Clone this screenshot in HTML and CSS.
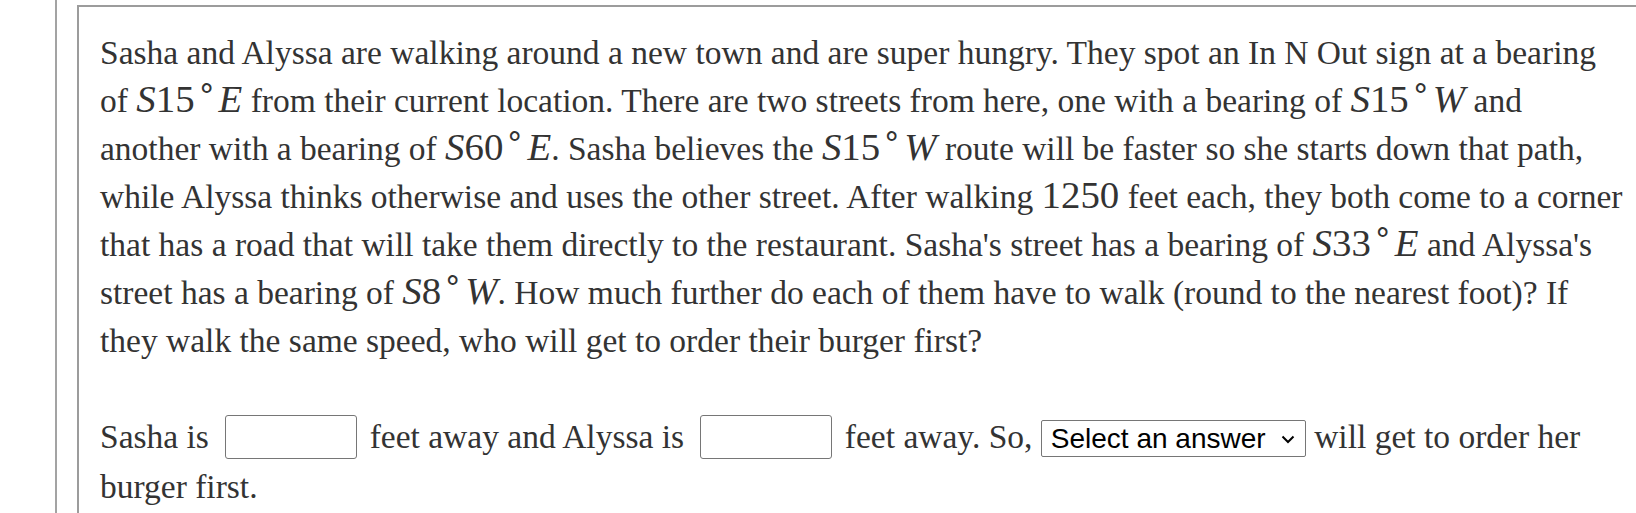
FILE: index.html
```html
<!DOCTYPE html>
<html>
<head>
<meta charset="utf-8">
<link rel="stylesheet" href="styles.css">
</head>
<body>
<div class="page">
  <div class="rail"></div>
  <div class="card">
    <p class="question">Sasha and Alyssa are walking around a new town and are super hungry. They spot an In N Out sign at a bearing<br>of <span class="math"><i>S</i>15<sup>∘</sup><i>E</i></span> from their current location. There are two streets from here, one with a bearing of <span class="math"><i>S</i>15<sup>∘</sup><i>W</i></span> and<br>another with a bearing of <span class="math"><i>S</i>60<sup>∘</sup><i>E</i></span>. Sasha believes the <span class="math"><i>S</i>15<sup>∘</sup><i>W</i></span> route will be faster so she starts down that path,<br>while Alyssa thinks otherwise and uses the other street. After walking <span class="math">1250</span> feet each, they both come to a corner<br>that has a road that will take them directly to the restaurant. Sasha's street has a bearing of <span class="math"><i>S</i>33<sup>∘</sup><i>E</i></span> and Alyssa's<br>street has a bearing of <span class="math"><i>S</i>8<sup>∘</sup><i>W</i></span>. How much further do each of them have to walk (round to the nearest foot)? If<br>they walk the same speed, who will get to order their burger first?</p>
    <p class="answer">Sasha is <input class="blank" type="text"> feet away and Alyssa is <input class="blank" type="text"> feet away. So, <span class="select-wrap"><select class="choice"><option>Select an answer</option></select><svg class="chev" viewBox="0 0 14 9" width="14" height="9"><path d="M1.5 1.5 L7 7 L12.5 1.5" fill="none" stroke="#000" stroke-width="2"/></svg></span> will get to order her<br>burger first.</p>
  </div>
</div>
</body>
</html>
```

FILE: styles.css
```css
html, body {
  margin: 0;
  padding: 0;
  background: #fff;
  overflow: hidden;
}
.page {
  display: flex;
  align-items: flex-start;
  height: 513px;
  width: 1700px;
}
.rail {
  margin-left: 55px;
  width: 2px;
  height: 513px;
  background: #a3a3a3;
  flex: none;
}
.card {
  margin-left: 20px;
  margin-top: 5px;
  width: 1560px;
  flex: none;
  border: 2px solid #9c9c9c;
  padding: 22px 40px 40px 21px;
  font-family: "Liberation Serif", "Times New Roman", serif;
  font-size: 33.5px;
  line-height: 48px;
  color: #333;
}
.question, .answer {
  margin: 0;
  white-space: nowrap;
}
.answer {
  margin-top: 47px;
  line-height: 50px;
}
.math {
  font-family: "Liberation Serif", serif;
  font-size: 1.16em;
  line-height: 0;
}
.math i {
  font-style: italic;
}
.math sup {
  font-size: 0.8em;
  line-height: 0;
  vertical-align: 0.45em;
  margin: 0 3px 0 2px;
}
.blank {
  width: 132px;
  height: 44px;
  box-sizing: border-box;
  border: 1px solid #767676;
  border-radius: 3px;
  margin: 0 4px 0 8px;
  vertical-align: middle;
  position: relative;
  top: -3px;
  font-size: 20px;
  padding: 0 4px;
}
.select-wrap {
  position: relative;
  display: inline-block;
  vertical-align: middle;
  top: -2px;
  line-height: 0;
}
.choice {
  appearance: none;
  -webkit-appearance: none;
  width: 265px;
  height: 37px;
  box-sizing: border-box;
  font-family: "Liberation Sans", Arial, sans-serif;
  font-size: 28px;
  color: #000;
  border: 1px solid #767676;
  border-radius: 2px;
  background: #fff;
  padding: 0 30px 0 9px;
  margin: 0;
}
.chev {
  position: absolute;
  right: 11px;
  top: 15px;
  pointer-events: none;
}
```
